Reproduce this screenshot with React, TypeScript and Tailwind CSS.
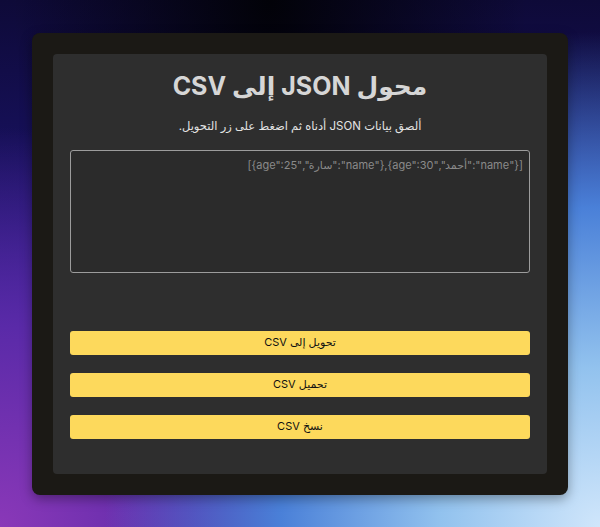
import { useState } from 'react';

const SAMPLE = '[{"name":"أحمد","age":30},{"name":"سارة","age":25}]';

const actions = ['تحويل إلى CSV', 'تحميل CSV', 'نسخ CSV'];

export default function App() {
  const [json, setJson] = useState('');

  return (
    <div
      dir="rtl"
      className="flex min-h-screen w-full items-center justify-center bg-[#120c48] bg-[radial-gradient(ellipse_at_45%_0%,#020208_0%,transparent_55%),radial-gradient(circle_at_100%_100%,#d0e6fb_0%,#92c2ee_20%,#4a80d8_40%,transparent_62%),radial-gradient(circle_at_0%_100%,#8a38b8_0%,#5a2aa8_25%,transparent_50%),linear-gradient(180deg,#0e0a38_0%,#1a1368_40%,#2a1c8c_70%,#3a2a90_100%)] font-['Inter','Noto_Sans','DejaVu_Sans',sans-serif]"
    >
      <div className="h-[462px] w-[536px] rounded-lg bg-[#1b1915] p-[21px] shadow-[0_4px_12px_rgba(0,0,0,0.35)]">
        <div className="flex h-full flex-col rounded bg-[#2e2e2e] px-[17px] pt-[14px]">
          <h1 className="text-center text-[25px] font-bold leading-[36px] text-[#d6d6d6]">
            محول JSON إلى CSV
          </h1>
          <p className="mt-[12px] text-center text-[11.5px] leading-5 text-[#e4e4e4]">
            ألصق بيانات JSON أدناه ثم اضغط على زر التحويل.
          </p>
          <textarea
            value={json}
            onChange={(event) => setJson(event.target.value)}
            placeholder={SAMPLE}
            className="mt-[14px] h-[123px] w-full resize-none rounded-[3px] border border-[#9c9c9c] bg-[#2b2b2b] px-[6px] py-[6px] text-[11px] text-[#e4e4e4] outline-none placeholder:text-[#8a8a8a]"
          />
          <div className="mt-[58px] flex flex-col gap-[18px]">
            {actions.map((label) => (
              <button
                key={label}
                type="button"
                className="h-6 w-full rounded-[3px] bg-[#fdd95c] text-[11px] text-[#111]"
              >
                {label}
              </button>
            ))}
          </div>
        </div>
      </div>
    </div>
  );
}
